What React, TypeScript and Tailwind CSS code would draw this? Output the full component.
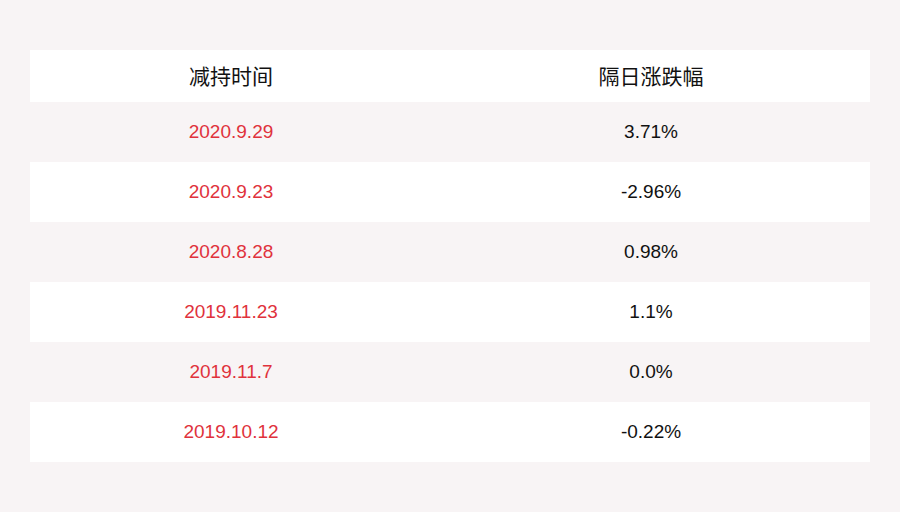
import React from "react";

const rows = [
  ["2020.9.29", "3.71%"],
  ["2020.9.23", "-2.96%"],
  ["2020.8.28", "0.98%"],
  ["2019.11.23", "1.1%"],
  ["2019.11.7", "0.0%"],
  ["2019.10.12", "-0.22%"],
];

export default function App() {
  return (
    <div
      className="w-[900px] h-[512px] bg-[#f8f4f5] pt-[50px] px-[30px]"
      style={{ fontFamily: '"Liberation Sans", "Noto Sans CJK SC", sans-serif' }}
    >
      <div className="flex flex-col">
        <div className="flex h-[52px] bg-white items-center text-[21px] text-[#111] pt-[1px]">
          <div className="w-[402px] text-center">减持时间</div>
          <div className="flex-1 text-center">隔日涨跌幅</div>
        </div>
        {rows.map((r, i) => (
          <div
            key={i}
            className={`flex h-[60px] items-center text-[19px] ${i % 2 === 0 ? "bg-[#f8f4f5]" : "bg-white"}`}
          >
            <div className="w-[402px] text-center text-[#e0323c]">{r[0]}</div>
            <div className="flex-1 text-center text-[#111]">{r[1]}</div>
          </div>
        ))}
      </div>
    </div>
  );
}
